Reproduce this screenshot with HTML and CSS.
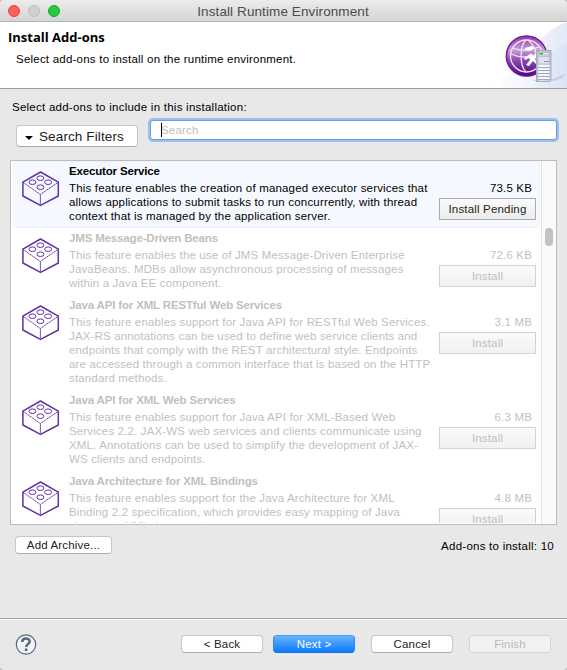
FILE: index.html
```html
<!DOCTYPE html>
<html lang="en">
<head>
<meta charset="utf-8">
<title>Install Runtime Environment</title>
<link rel="stylesheet" href="styles.css">
</head>
<body>
<svg class="defs" width="0" height="0">
  <symbol id="brick" viewBox="0 0 38 36">
    <g fill="none" stroke="#6232a0">
      <path stroke-width="1.5" stroke-linejoin="round" d="M18.500 1 36.300 11.200V25L18.500 34.400.9 25V11.200z"/>
      <path stroke-width="1" stroke-dasharray="1.6 .5" d="M.9 11.200 18.300 23.500 36.300 11.200"/>
      <path stroke-width="1.100" stroke="#8660b8" d="M18.400 23.500V34"/>
      <ellipse cx="18.400" cy="7.200" rx="3.500" ry="2.300"/>
      <ellipse cx="10.400" cy="11.200" rx="3.500" ry="2.300"/>
      <ellipse cx="26.100" cy="11.200" rx="3.500" ry="2.300"/>
      <ellipse cx="18.400" cy="16.200" rx="3.500" ry="2.300"/>
    </g>
  </symbol>
</svg>
<div class="window">
  <div class="titlebar">
    <div class="lights"><i class="light close"></i><i class="light idle"></i><i class="light grow"></i></div>
    <div class="window-title">Install Runtime Environment</div>
  </div>
  <header class="banner">
    <div class="banner-text">
      <h1>Install Add-ons</h1>
      <p>Select add-ons to install on the runtime environment.</p>
    </div>
    <svg class="banner-art" width="75" height="66" viewBox="492 22 75 66">
      <defs>
        <linearGradient id="sweep" x1="0" x2="1"><stop offset="0" stop-color="#fff"/><stop offset="1" stop-color="#e3eaf6"/></linearGradient>
        <linearGradient id="sweep2" x1="0" x2="1"><stop offset="0" stop-color="#eef2fa"/><stop offset="1" stop-color="#d9e3f3"/></linearGradient>
        <linearGradient id="globe" x1="0" x2="0" y1="0" y2="1"><stop offset="0" stop-color="#8a35a8"/><stop offset=".35" stop-color="#c9a0d8"/><stop offset=".62" stop-color="#8a45ad"/><stop offset="1" stop-color="#4d0583"/></linearGradient>
        <linearGradient id="tower" x1="0" x2="1"><stop offset="0" stop-color="#b4bccf"/><stop offset=".3" stop-color="#e4e8f0"/><stop offset="1" stop-color="#c3cada"/></linearGradient>
      </defs>
      <path fill="url(#sweep)" d="M567 22C545 30 538 44 531 53 520 68 508 77 492 88H567z"/>
      <path fill="url(#sweep2)" d="M567 44C552 47 542 60 531 88H567z"/>
      <path fill="#b8afc9" opacity=".45" d="M550 80 565 74 562 78 554 81H533V80z"/>
      <circle cx="526.5" cy="56" r="20.2" fill="url(#globe)" stroke="#711391" stroke-width="1.3"/>
      <g fill="none" stroke="#f2e5f6" stroke-width="1.3">
        <circle cx="526.5" cy="56" r="16"/>
        <path d="M526 40C520 45 519 65 526 72M528 40C534 45 536 49 536 55M511 54C520 58 529 58 538 53M513 48C520 51 530 51 539 47"/>
      </g>
      <path d="M525 48 532 46 534 48 530 51 525 50zM531 53.500 534 56 537 53 538 55 535 59 538 62 541 62V65L536 64 533 61 529 66 526 65 530 60 529 58 525 60 524 58z" fill="#fff"/>
      <path fill="#a3adc3" d="M536 51 538 50H551.500V80L550 82H536z"/>
      <path fill="url(#tower)" d="M537 51.500H550.500V81H537z"/>
      <path fill="#dde2eb" stroke="#9aa4bb" stroke-width=".5" d="M538 52.500h11.500v2.500H538zM538 56.500h11.500v7.500H538z"/>
      <path stroke="#35b035" stroke-width="1.400" d="M539.500 53.700h3.500"/>
      <path stroke="#8490ad" d="M544 61.500h5"/>
      <path stroke="#fff" stroke-width="1.300" d="M538 66h11.500M538 69h11.500M538 72h11.500M538 75h11.500M538 78h11.500"/>
      <path stroke="#8492b3" stroke-width=".7" d="M538 67.500h11.500M538 70.500h11.500M538 73.500h11.500M538 76.500h11.500M538 79.500h11.500"/>
    </svg>
  </header>
  <main class="content">
    <div class="prompt">Select add-ons to include in this installation:</div>
    <div class="tools">
      <div class="filter"><i class="arrow"></i><span>Search Filters</span></div>
      <div class="search"><i class="caret"></i><span>Search</span></div>
    </div>
    <div class="list">
      <div class="rows">
        <section class="row selected">
          <svg class="brick"><use href="#brick"/></svg>
          <div class="info"><h2>Executor Service</h2><p>This feature enables the creation of managed executor services that<br>allows applications to submit tasks to run concurrently, with thread<br>context that is managed by the application server.</p></div>
          <div class="action"><div class="size">73.5 KB</div><div class="install">Install Pending</div></div>
        </section>
        <section class="row">
          <svg class="brick"><use href="#brick"/></svg>
          <div class="info"><h2>JMS Message-Driven Beans</h2><p>This feature enables the use of JMS Message-Driven Enterprise<br>JavaBeans. MDBs allow asynchronous processing of messages<br>within a Java EE component.</p></div>
          <div class="action"><div class="size">72.6 KB</div><div class="install">Install</div></div>
        </section>
        <section class="row">
          <svg class="brick"><use href="#brick"/></svg>
          <div class="info"><h2>Java API for XML RESTful Web Services</h2><p>This feature enables support for Java API for RESTful Web Services.<br>JAX-RS annotations can be used to define web service clients and<br>endpoints that comply with the REST architectural style. Endpoints<br>are accessed through a common interface that is based on the HTTP<br>standard methods.</p></div>
          <div class="action"><div class="size">3.1 MB</div><div class="install">Install</div></div>
        </section>
        <section class="row">
          <svg class="brick"><use href="#brick"/></svg>
          <div class="info"><h2>Java API for XML Web Services</h2><p>This feature enables support for Java API for XML-Based Web<br>Services 2.2. JAX-WS web services and clients communicate using<br>XML. Annotations can be used to simplify the development of JAX-<br>WS clients and endpoints.</p></div>
          <div class="action"><div class="size">6.3 MB</div><div class="install">Install</div></div>
        </section>
        <section class="row">
          <svg class="brick"><use href="#brick"/></svg>
          <div class="info"><h2>Java Architecture for XML Bindings</h2><p>This feature enables support for the Java Architecture for XML<br>Binding 2.2 specification, which provides easy mapping of Java<br>classes to XML documents.</p></div>
          <div class="action"><div class="size">4.8 MB</div><div class="install">Install</div></div>
        </section>
      </div>
      <div class="scrollbar"><i class="thumb"></i></div>
    </div>
    <div class="summary">
      <div class="button archive">Add Archive...</div>
      <div class="count">Add-ons to install: 10</div>
    </div>
  </main>
  <footer class="footer">
    <svg class="help" width="22" height="22" viewBox="0 0 22 22" fill="none" stroke="#536884">
      <circle cx="11" cy="10.500" r="9.700" fill="#f2f3f5" stroke-width="1.200"/>
      <path stroke-width="2.500" d="M7.200 8C7.200 3.400 14.700 3.500 14.700 7.500 14.700 9.800 11.300 10 11.200 13"/>
      <circle cx="11.100" cy="15.800" r="1.500" fill="#536884" stroke="none"/>
    </svg>
    <div class="buttons">
      <div class="button">&lt; Back</div>
      <div class="button primary">Next &gt;</div>
      <div class="button">Cancel</div>
      <div class="button disabled">Finish</div>
    </div>
  </footer>
</div>
</body>
</html>
```
FILE: styles.css
```css
* { box-sizing: border-box; }
body {
  margin: 0;
  background: #b9b9b9;
  font: 11.5px/14px "Liberation Sans", Arial, sans-serif;
  letter-spacing: 0.17px;
  color: #000;
  white-space: nowrap;
}
h1, h2, p { margin: 0; }
.defs { display: block; }
.window {
  width: 567px;
  height: 670px;
  display: flex;
  flex-direction: column;
  overflow: hidden;
  background: #e8e8e8;
  border-radius: 4px;
}
.titlebar {
  height: 22px;
  flex: none;
  display: grid;
  grid-template-columns: 68px 1fr 69px;
  background: linear-gradient(#ececec, #d5d5d5);
  border-bottom: 1px solid #b4b4b4;
}
.lights { display: flex; gap: 8px; padding: 5px 0 0 8px; }
.light { width: 12px; height: 12px; border-radius: 50%; border: 1px solid; }
.close { background: #ff5f57; border-color: #e2463f; }
.idle { background: #d0d0d0; border-color: #bdbdbd; }
.grow { background: #28c840; border-color: #18ab29; }
.window-title { text-align: center; color: #4c4c4c; font-size: 13.5px; line-height: 23px; letter-spacing: 0.1px; }
.banner {
  height: 67px;
  flex: none;
  display: flex;
  justify-content: space-between;
  background: #fff;
  border-bottom: 1px solid #9b9b9b;
}
.banner-text { padding: 7px 0 0 8px; }
.banner h1 { font: bold 13px/16px "Open Sans", sans-serif; letter-spacing: 0; }
.banner p { padding: 7px 0 0 8px; letter-spacing: 0.22px; }
.banner-art { display: block; }
.content { flex: 1; padding: 11px 10px 0; }
.prompt { padding-left: 2px; letter-spacing: 0.25px; }
.tools { display: flex; gap: 10px; padding: 5px 0 0 6px; }
.filter {
  width: 122px;
  height: 22px;
  margin-top: 6px;
  display: flex;
  align-items: center;
  gap: 6px;
  padding: 1px 0 0 8px;
  background: #fff;
  border: 1px solid #c4c4c4;
  border-bottom-color: #aaa;
  border-radius: 4px;
  color: #222;
  font-size: 13.5px;
  letter-spacing: 0.12px;
}
.arrow { border: 4px solid transparent; border-top-color: #000; border-bottom: 0; margin-top: 2px; }
.search {
  width: 407px;
  height: 20px;
  margin: 1px 0 0 2px;
  display: flex;
  align-items: center;
  padding-left: 10px;
  background: #fff;
  border: 1px solid #6f9fd6;
  border-radius: 3px;
  box-shadow: 0 0 0 2px #98c1f0;
  color: #bfbfbf;
}
.caret { width: 1px; height: 14px; background: #000; margin-right: -1px; }
.list {
  height: 365px;
  width: 547px;
  margin-top: 13px;
  display: flex;
  background: #fff;
  border: 1px solid #bdbdbd;
  overflow: hidden;
}
.rows { width: 530px; height: 362px; overflow: hidden; padding-left: 2px; }
.row {
  width: 527px;
  display: flex;
  padding: 3px 4px 5px 9px;
  color: #bfbfbf;
}
.selected { color: #000; background: #f5f9ff; border-radius: 4px; box-shadow: inset 0 0 0 1px #eaf4fe; }
.brick { width: 38px; height: 36px; margin: 7px 9px 0 0; flex: none; }
.info { flex: 1; min-height: 59px; }
.info h2 { font-size: 11.5px; line-height: 14px; letter-spacing: -0.16px; }
.info p { padding-top: 3px; letter-spacing: 0.15px; }
.selected p { letter-spacing: 0.18px; }
.action { width: 97px; padding-top: 17px; flex: none; }
.size { text-align: right; padding-right: 4px; }
.install {
  height: 22px;
  margin-top: 3px;
  line-height: 21px;
  text-align: center;
  background: linear-gradient(#fafafa, #f1f1f1);
  border: 1px solid #d3d3d3;
}
.selected .install { color: #222; background: linear-gradient(#fafafa, #ededed); border-color: #aaa; }
.scrollbar { width: 15px; background: #fafafa; border-left: 1px solid #e4e4e4; padding: 67px 0 0 3px; }
.thumb { display: block; width: 8px; height: 18px; border-radius: 4px; background: #c2c2c2; }
.summary { display: flex; justify-content: space-between; padding: 11px 3px 0 5px; }
.count { line-height: 20px; letter-spacing: 0.25px; }
.button {
  width: 82px;
  height: 18px;
  line-height: 17px;
  text-align: center;
  color: #222;
  background: #fff;
  border: 1px solid #c6c6c6;
  border-bottom-color: #adadad;
  border-radius: 4px;
}
.archive { width: 97px; }
.footer {
  height: 52px;
  flex: none;
  display: flex;
  justify-content: space-between;
  padding: 15px 16px 0 15px;
  border-top: 1px solid #a0a0a0;
  box-shadow: inset 0 1px #fff;
}
.buttons { display: flex; gap: 16px; padding-top: 1px; }
.buttons .primary { color: #fff; background: linear-gradient(#69b2fa, #0a7bff); border-color: #4aa0f8 #2a86f5 #1370ea; margin: 0 0 0 -6px; }
.disabled { color: #b9b9b9; background: #f2f2f2; border-color: #d6d6d6; }
```
